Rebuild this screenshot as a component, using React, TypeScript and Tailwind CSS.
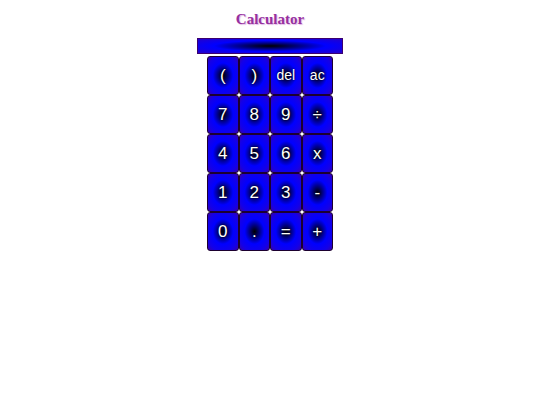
const keys = ["(", ")", "del", "ac", "7", "8", "9", "÷", "4", "5", "6", "x", "1", "2", "3", "-", "0", ".", "=", "+"];

const Key = ({ label }: { label: string }) => {
  const small = label.length > 1;
  return (
    <button
      className={`flex h-[39px] w-[31.5px] items-center justify-center rounded-[3px] border border-[#1c0030] bg-[radial-gradient(ellipse_at_center,#000_0%,#0000ff_48%,#1400e8_78%,#3800a8_100%)] text-white [text-shadow:0_0_2px_#000] ${
        small ? "text-[14px]" : "text-[17px]"
      }`}
      style={{ fontFamily: '"Liberation Sans", Arial, sans-serif' }}
    >
      {label}
    </button>
  );
};

const App = () => {
  return (
    <div className="flex min-h-[405px] w-full flex-col items-center bg-white">
      <h1
        className="mt-[9px] text-[15px] font-bold leading-[20px] text-[#96309f] [text-shadow:1px_1px_1px_#e0b8e6]"
        style={{ fontFamily: '"Liberation Serif", "Times New Roman", serif' }}
      >
        Calculator
      </h1>
      <div className="mt-[9px] h-[16px] w-[146px] border border-[#3a0070] bg-[radial-gradient(ellipse_at_center,#000_0%,#0000ff_55%,#2600c8_100%)]" />
      <div className="mt-[2px] grid grid-cols-4">
        {keys.map((k) => (
          <Key key={k} label={k} />
        ))}
      </div>
    </div>
  );
};

export default App;
